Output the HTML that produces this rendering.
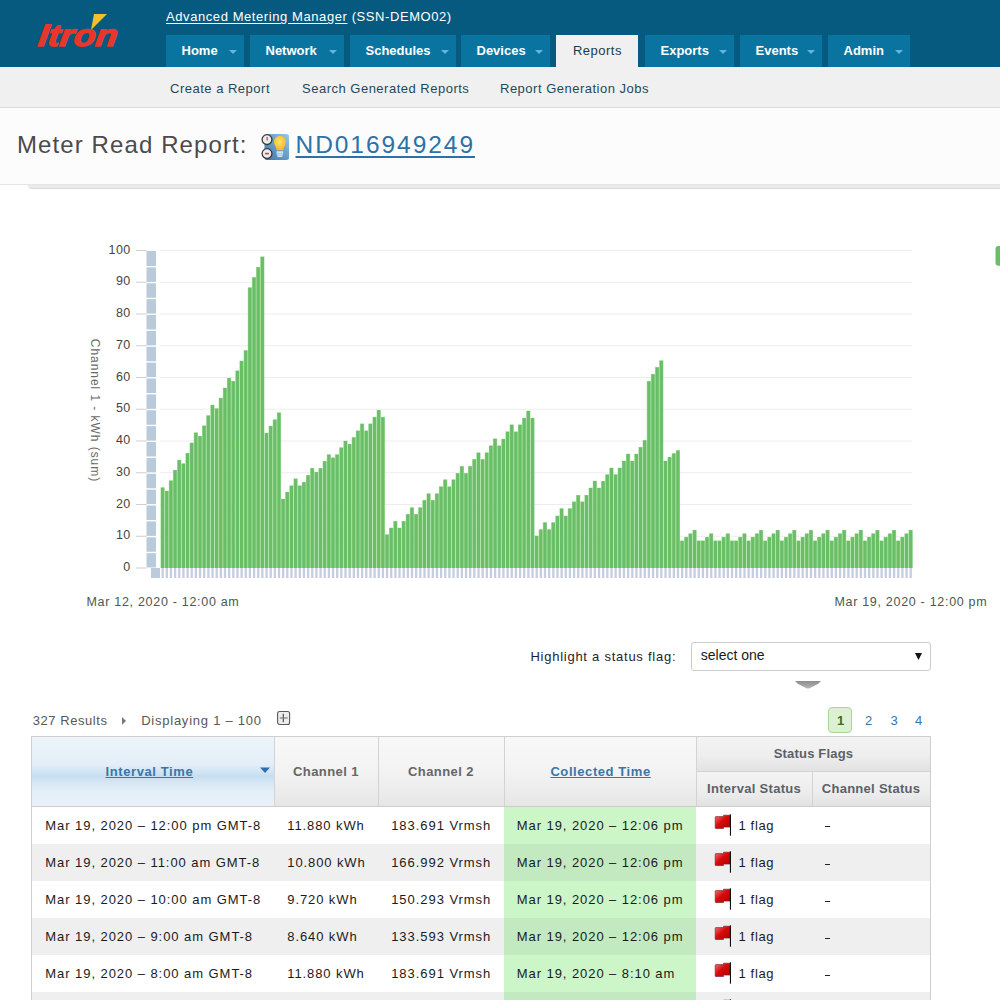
<!DOCTYPE html>
<html><head><meta charset="utf-8"><style>
html,body{margin:0;padding:0;background:#fff;}
body{width:1000px;height:1000px;overflow:hidden;position:relative;font-family:"Liberation Sans",sans-serif;}
.a{position:absolute;box-sizing:border-box;}
.t{position:absolute;white-space:pre;line-height:1;color:#1b1b1b;}
u{text-decoration:underline;text-underline-offset:2px;}
.yl{font-family:"Liberation Sans",sans-serif;font-size:12.5px;fill:#444;letter-spacing:0.35px;}
.axt{font-family:"Liberation Sans",sans-serif;font-size:12px;fill:#6a6a6a;letter-spacing:0.95px;}
</style></head><body>
<div class="a" style="left:0px;top:0px;width:1000px;height:67px;background:#065a7f"></div>
<div class="a" style="left:0px;top:67px;width:1000px;height:1px;background:#e6f5f9"></div>
<svg class="a" style="left:30px;top:5px" width="100" height="50" viewBox="0 0 100 50">
<polygon points="64,9 77,9 61,25" fill="#f3bf2d"/>
<text x="9" y="41.5" font-family="Liberation Sans" font-weight="700" font-style="italic" font-size="31" fill="#e8362b" stroke="#e8362b" stroke-width="1.3" stroke-linejoin="round" textLength="79" lengthAdjust="spacingAndGlyphs" transform="skewX(-8) translate(4,0)">Itron</text>
</svg>
<div class="t " style="left:166.00px;top:10.00px;font-size:13px;color:#fff;letter-spacing:0.58px"><u>Advanced Metering Manager</u> (SSN-DEMO02)</div>
<div class="a" style="left:166px;top:35px;width:78px;height:32px;background:#0974a0"></div>
<div class="t " style="left:181.50px;top:44.00px;font-size:13px;color:#fff;font-weight:700">Home</div>
<div class="a" style="left:229px;top:50px;width:0;height:0;border-left:4px solid transparent;border-right:4px solid transparent;border-top:4px solid #64b5de"></div>
<div class="a" style="left:250px;top:35px;width:94px;height:32px;background:#0974a0"></div>
<div class="t " style="left:265.50px;top:44.00px;font-size:13px;color:#fff;font-weight:700">Network</div>
<div class="a" style="left:329px;top:50px;width:0;height:0;border-left:4px solid transparent;border-right:4px solid transparent;border-top:4px solid #64b5de"></div>
<div class="a" style="left:350px;top:35px;width:105.5px;height:32px;background:#0974a0"></div>
<div class="t " style="left:365.50px;top:44.00px;font-size:13px;color:#fff;font-weight:700">Schedules</div>
<div class="a" style="left:440.5px;top:50px;width:0;height:0;border-left:4px solid transparent;border-right:4px solid transparent;border-top:4px solid #64b5de"></div>
<div class="a" style="left:461px;top:35px;width:88.5px;height:32px;background:#0974a0"></div>
<div class="t " style="left:476.50px;top:44.00px;font-size:13px;color:#fff;font-weight:700">Devices</div>
<div class="a" style="left:534.5px;top:50px;width:0;height:0;border-left:4px solid transparent;border-right:4px solid transparent;border-top:4px solid #64b5de"></div>
<div class="a" style="left:556px;top:35px;width:82px;height:33px;background:#f0f0f0"></div>
<div class="t " style="left:573.00px;top:44.00px;font-size:13px;color:#1e3a4c;letter-spacing:0.48px">Reports</div>
<div class="a" style="left:645px;top:35px;width:89px;height:32px;background:#0974a0"></div>
<div class="t " style="left:660.50px;top:44.00px;font-size:13px;color:#fff;font-weight:700">Exports</div>
<div class="a" style="left:719px;top:50px;width:0;height:0;border-left:4px solid transparent;border-right:4px solid transparent;border-top:4px solid #64b5de"></div>
<div class="a" style="left:740px;top:35px;width:82px;height:32px;background:#0974a0"></div>
<div class="t " style="left:755.50px;top:44.00px;font-size:13px;color:#fff;font-weight:700">Events</div>
<div class="a" style="left:807px;top:50px;width:0;height:0;border-left:4px solid transparent;border-right:4px solid transparent;border-top:4px solid #64b5de"></div>
<div class="a" style="left:828px;top:35px;width:82px;height:32px;background:#0974a0"></div>
<div class="t " style="left:843.50px;top:44.00px;font-size:13px;color:#fff;font-weight:700">Admin</div>
<div class="a" style="left:895px;top:50px;width:0;height:0;border-left:4px solid transparent;border-right:4px solid transparent;border-top:4px solid #64b5de"></div>
<div class="a" style="left:0px;top:68px;width:1000px;height:39px;background:#f0f0f0"></div>
<div class="a" style="left:0px;top:107px;width:1000px;height:1px;background:#dcdcdc"></div>
<div class="t " style="left:170.00px;top:82.30px;font-size:13px;color:#1d4a5b;letter-spacing:0.5px">Create a Report</div>
<div class="t " style="left:302.00px;top:82.30px;font-size:13px;color:#1d4a5b;letter-spacing:0.5px">Search Generated Reports</div>
<div class="t " style="left:500.00px;top:82.30px;font-size:13px;color:#1d4a5b;letter-spacing:0.5px">Report Generation Jobs</div>
<div class="a" style="left:0px;top:108px;width:1000px;height:76px;background:#fdfcfc"></div>
<div class="a" style="left:0px;top:184px;width:1000px;height:1px;background:#e4e4e4"></div>
<div class="a" style="left:28px;top:185px;width:972px;height:3.5px;background:#ebebeb;border-bottom:1px solid #dadada;border-bottom-left-radius:4px"></div>
<div class="t " style="left:17.00px;top:133.43px;font-size:24px;color:#4b4b4b;letter-spacing:1.1px">Meter Read Report:</div>
<svg class="a" style="left:261px;top:133px" width="29" height="28" viewBox="0 0 29 28">
<defs><linearGradient id="ib" x1="0" y1="1" x2="1" y2="0"><stop offset="0" stop-color="#3f74a8"/><stop offset="0.6" stop-color="#6ea3cc"/><stop offset="1" stop-color="#9ccbe6"/></linearGradient>
<radialGradient id="bulb" cx="0.45" cy="0.4" r="0.7"><stop offset="0" stop-color="#fde36a"/><stop offset="1" stop-color="#f0b21a"/></radialGradient></defs>
<rect x="3.5" y="1" width="24.5" height="26" rx="2.5" fill="url(#ib)"/>
<circle cx="6" cy="6.6" r="4.9" fill="#ececec" stroke="#3a3a3a" stroke-width="1.3"/>
<circle cx="6" cy="20.6" r="4.9" fill="#ececec" stroke="#3a3a3a" stroke-width="1.3"/>
<path d="M6 4 L6.3 7.5" stroke="#cf3a55" stroke-width="1.2"/>
<path d="M4 20.6 L8 20.6" stroke="#d8405a" stroke-width="1.6"/>
<path d="M19 3 C22.6 3 25 5.6 25 8.8 C25 11.5 23 13.5 22.2 17.2 L15.8 17.2 C15 13.5 13 11.5 13 8.8 C13 5.6 15.4 3 19 3 Z" fill="url(#bulb)"/>
<rect x="15.6" y="18.4" width="6.6" height="1.4" fill="#eef7fc"/><rect x="15.6" y="20.4" width="6.6" height="1.4" fill="#d9ecf7"/><rect x="16.4" y="22.4" width="5" height="1.4" fill="#eef7fc"/>
</svg>
<div class="t " style="left:295.50px;top:133.01px;font-size:24.5px;color:#2b72a9;letter-spacing:1.95px"><u style="text-underline-offset:3px">ND016949249</u></div>
<svg class="a" style="left:0;top:0" width="1000" height="620" viewBox="0 0 1000 620"><rect x="160" y="250.00" width="752" height="1" fill="#ededed"/>
<rect x="160" y="281.75" width="752" height="1" fill="#ededed"/>
<rect x="160" y="313.50" width="752" height="1" fill="#ededed"/>
<rect x="160" y="345.25" width="752" height="1" fill="#ededed"/>
<rect x="160" y="377.00" width="752" height="1" fill="#ededed"/>
<rect x="160" y="408.75" width="752" height="1" fill="#ededed"/>
<rect x="160" y="440.50" width="752" height="1" fill="#ededed"/>
<rect x="160" y="472.25" width="752" height="1" fill="#ededed"/>
<rect x="160" y="504.00" width="752" height="1" fill="#ededed"/>
<rect x="160" y="535.75" width="752" height="1" fill="#ededed"/>
<rect x="136" y="250.00" width="10.5" height="1" fill="#cfcfcf"/>
<rect x="136" y="281.75" width="10.5" height="1" fill="#cfcfcf"/>
<rect x="136" y="313.50" width="10.5" height="1" fill="#cfcfcf"/>
<rect x="136" y="345.25" width="10.5" height="1" fill="#cfcfcf"/>
<rect x="136" y="377.00" width="10.5" height="1" fill="#cfcfcf"/>
<rect x="136" y="408.75" width="10.5" height="1" fill="#cfcfcf"/>
<rect x="136" y="440.50" width="10.5" height="1" fill="#cfcfcf"/>
<rect x="136" y="472.25" width="10.5" height="1" fill="#cfcfcf"/>
<rect x="136" y="504.00" width="10.5" height="1" fill="#cfcfcf"/>
<rect x="136" y="535.75" width="10.5" height="1" fill="#cfcfcf"/>
<rect x="136" y="567.50" width="10.5" height="1" fill="#cfcfcf"/>
<text x="130.5" y="253.60" text-anchor="end" class="yl">100</text>
<text x="130.5" y="285.35" text-anchor="end" class="yl">90</text>
<text x="130.5" y="317.10" text-anchor="end" class="yl">80</text>
<text x="130.5" y="348.85" text-anchor="end" class="yl">70</text>
<text x="130.5" y="380.60" text-anchor="end" class="yl">60</text>
<text x="130.5" y="412.35" text-anchor="end" class="yl">50</text>
<text x="130.5" y="444.10" text-anchor="end" class="yl">40</text>
<text x="130.5" y="475.85" text-anchor="end" class="yl">30</text>
<text x="130.5" y="507.60" text-anchor="end" class="yl">20</text>
<text x="130.5" y="539.35" text-anchor="end" class="yl">10</text>
<text x="130.5" y="571.10" text-anchor="end" class="yl">0</text>
<rect x="146.5" y="251.00" width="9.5" height="15.00" fill="#b9cadb"/>
<rect x="146.5" y="267.40" width="9.5" height="14.48" fill="#b9cadb"/>
<rect x="146.5" y="283.27" width="9.5" height="14.48" fill="#b9cadb"/>
<rect x="146.5" y="299.15" width="9.5" height="14.48" fill="#b9cadb"/>
<rect x="146.5" y="315.02" width="9.5" height="14.48" fill="#b9cadb"/>
<rect x="146.5" y="330.90" width="9.5" height="14.48" fill="#b9cadb"/>
<rect x="146.5" y="346.77" width="9.5" height="14.48" fill="#b9cadb"/>
<rect x="146.5" y="362.65" width="9.5" height="14.48" fill="#b9cadb"/>
<rect x="146.5" y="378.52" width="9.5" height="14.48" fill="#b9cadb"/>
<rect x="146.5" y="394.40" width="9.5" height="14.48" fill="#b9cadb"/>
<rect x="146.5" y="410.27" width="9.5" height="14.48" fill="#b9cadb"/>
<rect x="146.5" y="426.15" width="9.5" height="14.48" fill="#b9cadb"/>
<rect x="146.5" y="442.02" width="9.5" height="14.48" fill="#b9cadb"/>
<rect x="146.5" y="457.90" width="9.5" height="14.48" fill="#b9cadb"/>
<rect x="146.5" y="473.77" width="9.5" height="14.48" fill="#b9cadb"/>
<rect x="146.5" y="489.65" width="9.5" height="14.48" fill="#b9cadb"/>
<rect x="146.5" y="505.52" width="9.5" height="14.48" fill="#b9cadb"/>
<rect x="146.5" y="521.40" width="9.5" height="14.48" fill="#b9cadb"/>
<rect x="146.5" y="537.27" width="9.5" height="14.48" fill="#b9cadb"/>
<rect x="146.5" y="553.15" width="9.5" height="14.35" fill="#b9cadb"/>
<rect x="151" y="568" width="9" height="10" fill="#bccadb"/>
<rect x="161.50" y="568" width="2.3" height="10" fill="#c6cde0"/>
<rect x="165.66" y="568" width="2.3" height="10" fill="#c6cde0"/>
<rect x="169.81" y="568" width="2.3" height="10" fill="#c6cde0"/>
<rect x="173.97" y="568" width="2.3" height="10" fill="#c6cde0"/>
<rect x="178.12" y="568" width="2.3" height="10" fill="#c6cde0"/>
<rect x="182.28" y="568" width="2.3" height="10" fill="#c6cde0"/>
<rect x="186.44" y="568" width="2.3" height="10" fill="#c6cde0"/>
<rect x="190.59" y="568" width="2.3" height="10" fill="#c6cde0"/>
<rect x="194.75" y="568" width="2.3" height="10" fill="#c6cde0"/>
<rect x="198.90" y="568" width="2.3" height="10" fill="#c6cde0"/>
<rect x="203.06" y="568" width="2.3" height="10" fill="#c6cde0"/>
<rect x="207.22" y="568" width="2.3" height="10" fill="#c6cde0"/>
<rect x="211.37" y="568" width="2.3" height="10" fill="#c6cde0"/>
<rect x="215.53" y="568" width="2.3" height="10" fill="#c6cde0"/>
<rect x="219.68" y="568" width="2.3" height="10" fill="#c6cde0"/>
<rect x="223.84" y="568" width="2.3" height="10" fill="#c6cde0"/>
<rect x="228.00" y="568" width="2.3" height="10" fill="#c6cde0"/>
<rect x="232.15" y="568" width="2.3" height="10" fill="#c6cde0"/>
<rect x="236.31" y="568" width="2.3" height="10" fill="#c6cde0"/>
<rect x="240.46" y="568" width="2.3" height="10" fill="#c6cde0"/>
<rect x="244.62" y="568" width="2.3" height="10" fill="#c6cde0"/>
<rect x="248.78" y="568" width="2.3" height="10" fill="#c6cde0"/>
<rect x="252.93" y="568" width="2.3" height="10" fill="#c6cde0"/>
<rect x="257.09" y="568" width="2.3" height="10" fill="#c6cde0"/>
<rect x="261.24" y="568" width="2.3" height="10" fill="#c6cde0"/>
<rect x="265.40" y="568" width="2.3" height="10" fill="#c6cde0"/>
<rect x="269.56" y="568" width="2.3" height="10" fill="#c6cde0"/>
<rect x="273.71" y="568" width="2.3" height="10" fill="#c6cde0"/>
<rect x="277.87" y="568" width="2.3" height="10" fill="#c6cde0"/>
<rect x="282.02" y="568" width="2.3" height="10" fill="#c6cde0"/>
<rect x="286.18" y="568" width="2.3" height="10" fill="#c6cde0"/>
<rect x="290.34" y="568" width="2.3" height="10" fill="#c6cde0"/>
<rect x="294.49" y="568" width="2.3" height="10" fill="#c6cde0"/>
<rect x="298.65" y="568" width="2.3" height="10" fill="#c6cde0"/>
<rect x="302.80" y="568" width="2.3" height="10" fill="#c6cde0"/>
<rect x="306.96" y="568" width="2.3" height="10" fill="#c6cde0"/>
<rect x="311.12" y="568" width="2.3" height="10" fill="#c6cde0"/>
<rect x="315.27" y="568" width="2.3" height="10" fill="#c6cde0"/>
<rect x="319.43" y="568" width="2.3" height="10" fill="#c6cde0"/>
<rect x="323.58" y="568" width="2.3" height="10" fill="#c6cde0"/>
<rect x="327.74" y="568" width="2.3" height="10" fill="#c6cde0"/>
<rect x="331.90" y="568" width="2.3" height="10" fill="#c6cde0"/>
<rect x="336.05" y="568" width="2.3" height="10" fill="#c6cde0"/>
<rect x="340.21" y="568" width="2.3" height="10" fill="#c6cde0"/>
<rect x="344.36" y="568" width="2.3" height="10" fill="#c6cde0"/>
<rect x="348.52" y="568" width="2.3" height="10" fill="#c6cde0"/>
<rect x="352.68" y="568" width="2.3" height="10" fill="#c6cde0"/>
<rect x="356.83" y="568" width="2.3" height="10" fill="#c6cde0"/>
<rect x="360.99" y="568" width="2.3" height="10" fill="#c6cde0"/>
<rect x="365.14" y="568" width="2.3" height="10" fill="#c6cde0"/>
<rect x="369.30" y="568" width="2.3" height="10" fill="#c6cde0"/>
<rect x="373.46" y="568" width="2.3" height="10" fill="#c6cde0"/>
<rect x="377.61" y="568" width="2.3" height="10" fill="#c6cde0"/>
<rect x="381.77" y="568" width="2.3" height="10" fill="#c6cde0"/>
<rect x="385.92" y="568" width="2.3" height="10" fill="#c6cde0"/>
<rect x="390.08" y="568" width="2.3" height="10" fill="#c6cde0"/>
<rect x="394.24" y="568" width="2.3" height="10" fill="#c6cde0"/>
<rect x="398.39" y="568" width="2.3" height="10" fill="#c6cde0"/>
<rect x="402.55" y="568" width="2.3" height="10" fill="#c6cde0"/>
<rect x="406.70" y="568" width="2.3" height="10" fill="#c6cde0"/>
<rect x="410.86" y="568" width="2.3" height="10" fill="#c6cde0"/>
<rect x="415.02" y="568" width="2.3" height="10" fill="#c6cde0"/>
<rect x="419.17" y="568" width="2.3" height="10" fill="#c6cde0"/>
<rect x="423.33" y="568" width="2.3" height="10" fill="#c6cde0"/>
<rect x="427.48" y="568" width="2.3" height="10" fill="#c6cde0"/>
<rect x="431.64" y="568" width="2.3" height="10" fill="#c6cde0"/>
<rect x="435.80" y="568" width="2.3" height="10" fill="#c6cde0"/>
<rect x="439.95" y="568" width="2.3" height="10" fill="#c6cde0"/>
<rect x="444.11" y="568" width="2.3" height="10" fill="#c6cde0"/>
<rect x="448.26" y="568" width="2.3" height="10" fill="#c6cde0"/>
<rect x="452.42" y="568" width="2.3" height="10" fill="#c6cde0"/>
<rect x="456.58" y="568" width="2.3" height="10" fill="#c6cde0"/>
<rect x="460.73" y="568" width="2.3" height="10" fill="#c6cde0"/>
<rect x="464.89" y="568" width="2.3" height="10" fill="#c6cde0"/>
<rect x="469.04" y="568" width="2.3" height="10" fill="#c6cde0"/>
<rect x="473.20" y="568" width="2.3" height="10" fill="#c6cde0"/>
<rect x="477.36" y="568" width="2.3" height="10" fill="#c6cde0"/>
<rect x="481.51" y="568" width="2.3" height="10" fill="#c6cde0"/>
<rect x="485.67" y="568" width="2.3" height="10" fill="#c6cde0"/>
<rect x="489.82" y="568" width="2.3" height="10" fill="#c6cde0"/>
<rect x="493.98" y="568" width="2.3" height="10" fill="#c6cde0"/>
<rect x="498.14" y="568" width="2.3" height="10" fill="#c6cde0"/>
<rect x="502.29" y="568" width="2.3" height="10" fill="#c6cde0"/>
<rect x="506.45" y="568" width="2.3" height="10" fill="#c6cde0"/>
<rect x="510.60" y="568" width="2.3" height="10" fill="#c6cde0"/>
<rect x="514.76" y="568" width="2.3" height="10" fill="#c6cde0"/>
<rect x="518.92" y="568" width="2.3" height="10" fill="#c6cde0"/>
<rect x="523.07" y="568" width="2.3" height="10" fill="#c6cde0"/>
<rect x="527.23" y="568" width="2.3" height="10" fill="#c6cde0"/>
<rect x="531.38" y="568" width="2.3" height="10" fill="#c6cde0"/>
<rect x="535.54" y="568" width="2.3" height="10" fill="#c6cde0"/>
<rect x="539.70" y="568" width="2.3" height="10" fill="#c6cde0"/>
<rect x="543.85" y="568" width="2.3" height="10" fill="#c6cde0"/>
<rect x="548.01" y="568" width="2.3" height="10" fill="#c6cde0"/>
<rect x="552.16" y="568" width="2.3" height="10" fill="#c6cde0"/>
<rect x="556.32" y="568" width="2.3" height="10" fill="#c6cde0"/>
<rect x="560.48" y="568" width="2.3" height="10" fill="#c6cde0"/>
<rect x="564.63" y="568" width="2.3" height="10" fill="#c6cde0"/>
<rect x="568.79" y="568" width="2.3" height="10" fill="#c6cde0"/>
<rect x="572.94" y="568" width="2.3" height="10" fill="#c6cde0"/>
<rect x="577.10" y="568" width="2.3" height="10" fill="#c6cde0"/>
<rect x="581.26" y="568" width="2.3" height="10" fill="#c6cde0"/>
<rect x="585.41" y="568" width="2.3" height="10" fill="#c6cde0"/>
<rect x="589.57" y="568" width="2.3" height="10" fill="#c6cde0"/>
<rect x="593.72" y="568" width="2.3" height="10" fill="#c6cde0"/>
<rect x="597.88" y="568" width="2.3" height="10" fill="#c6cde0"/>
<rect x="602.04" y="568" width="2.3" height="10" fill="#c6cde0"/>
<rect x="606.19" y="568" width="2.3" height="10" fill="#c6cde0"/>
<rect x="610.35" y="568" width="2.3" height="10" fill="#c6cde0"/>
<rect x="614.50" y="568" width="2.3" height="10" fill="#c6cde0"/>
<rect x="618.66" y="568" width="2.3" height="10" fill="#c6cde0"/>
<rect x="622.82" y="568" width="2.3" height="10" fill="#c6cde0"/>
<rect x="626.97" y="568" width="2.3" height="10" fill="#c6cde0"/>
<rect x="631.13" y="568" width="2.3" height="10" fill="#c6cde0"/>
<rect x="635.28" y="568" width="2.3" height="10" fill="#c6cde0"/>
<rect x="639.44" y="568" width="2.3" height="10" fill="#c6cde0"/>
<rect x="643.60" y="568" width="2.3" height="10" fill="#c6cde0"/>
<rect x="647.75" y="568" width="2.3" height="10" fill="#c6cde0"/>
<rect x="651.91" y="568" width="2.3" height="10" fill="#c6cde0"/>
<rect x="656.06" y="568" width="2.3" height="10" fill="#c6cde0"/>
<rect x="660.22" y="568" width="2.3" height="10" fill="#c6cde0"/>
<rect x="664.38" y="568" width="2.3" height="10" fill="#c6cde0"/>
<rect x="668.53" y="568" width="2.3" height="10" fill="#c6cde0"/>
<rect x="672.69" y="568" width="2.3" height="10" fill="#c6cde0"/>
<rect x="676.84" y="568" width="2.3" height="10" fill="#c6cde0"/>
<rect x="681.00" y="568" width="2.3" height="10" fill="#c6cde0"/>
<rect x="685.16" y="568" width="2.3" height="10" fill="#c6cde0"/>
<rect x="689.31" y="568" width="2.3" height="10" fill="#c6cde0"/>
<rect x="693.47" y="568" width="2.3" height="10" fill="#c6cde0"/>
<rect x="697.62" y="568" width="2.3" height="10" fill="#c6cde0"/>
<rect x="701.78" y="568" width="2.3" height="10" fill="#c6cde0"/>
<rect x="705.94" y="568" width="2.3" height="10" fill="#c6cde0"/>
<rect x="710.09" y="568" width="2.3" height="10" fill="#c6cde0"/>
<rect x="714.25" y="568" width="2.3" height="10" fill="#c6cde0"/>
<rect x="718.40" y="568" width="2.3" height="10" fill="#c6cde0"/>
<rect x="722.56" y="568" width="2.3" height="10" fill="#c6cde0"/>
<rect x="726.72" y="568" width="2.3" height="10" fill="#c6cde0"/>
<rect x="730.87" y="568" width="2.3" height="10" fill="#c6cde0"/>
<rect x="735.03" y="568" width="2.3" height="10" fill="#c6cde0"/>
<rect x="739.18" y="568" width="2.3" height="10" fill="#c6cde0"/>
<rect x="743.34" y="568" width="2.3" height="10" fill="#c6cde0"/>
<rect x="747.50" y="568" width="2.3" height="10" fill="#c6cde0"/>
<rect x="751.65" y="568" width="2.3" height="10" fill="#c6cde0"/>
<rect x="755.81" y="568" width="2.3" height="10" fill="#c6cde0"/>
<rect x="759.96" y="568" width="2.3" height="10" fill="#c6cde0"/>
<rect x="764.12" y="568" width="2.3" height="10" fill="#c6cde0"/>
<rect x="768.28" y="568" width="2.3" height="10" fill="#c6cde0"/>
<rect x="772.43" y="568" width="2.3" height="10" fill="#c6cde0"/>
<rect x="776.59" y="568" width="2.3" height="10" fill="#c6cde0"/>
<rect x="780.74" y="568" width="2.3" height="10" fill="#c6cde0"/>
<rect x="784.90" y="568" width="2.3" height="10" fill="#c6cde0"/>
<rect x="789.06" y="568" width="2.3" height="10" fill="#c6cde0"/>
<rect x="793.21" y="568" width="2.3" height="10" fill="#c6cde0"/>
<rect x="797.37" y="568" width="2.3" height="10" fill="#c6cde0"/>
<rect x="801.52" y="568" width="2.3" height="10" fill="#c6cde0"/>
<rect x="805.68" y="568" width="2.3" height="10" fill="#c6cde0"/>
<rect x="809.84" y="568" width="2.3" height="10" fill="#c6cde0"/>
<rect x="813.99" y="568" width="2.3" height="10" fill="#c6cde0"/>
<rect x="818.15" y="568" width="2.3" height="10" fill="#c6cde0"/>
<rect x="822.30" y="568" width="2.3" height="10" fill="#c6cde0"/>
<rect x="826.46" y="568" width="2.3" height="10" fill="#c6cde0"/>
<rect x="830.62" y="568" width="2.3" height="10" fill="#c6cde0"/>
<rect x="834.77" y="568" width="2.3" height="10" fill="#c6cde0"/>
<rect x="838.93" y="568" width="2.3" height="10" fill="#c6cde0"/>
<rect x="843.08" y="568" width="2.3" height="10" fill="#c6cde0"/>
<rect x="847.24" y="568" width="2.3" height="10" fill="#c6cde0"/>
<rect x="851.40" y="568" width="2.3" height="10" fill="#c6cde0"/>
<rect x="855.55" y="568" width="2.3" height="10" fill="#c6cde0"/>
<rect x="859.71" y="568" width="2.3" height="10" fill="#c6cde0"/>
<rect x="863.86" y="568" width="2.3" height="10" fill="#c6cde0"/>
<rect x="868.02" y="568" width="2.3" height="10" fill="#c6cde0"/>
<rect x="872.18" y="568" width="2.3" height="10" fill="#c6cde0"/>
<rect x="876.33" y="568" width="2.3" height="10" fill="#c6cde0"/>
<rect x="880.49" y="568" width="2.3" height="10" fill="#c6cde0"/>
<rect x="884.64" y="568" width="2.3" height="10" fill="#c6cde0"/>
<rect x="888.80" y="568" width="2.3" height="10" fill="#c6cde0"/>
<rect x="892.96" y="568" width="2.3" height="10" fill="#c6cde0"/>
<rect x="897.11" y="568" width="2.3" height="10" fill="#c6cde0"/>
<rect x="901.27" y="568" width="2.3" height="10" fill="#c6cde0"/>
<rect x="905.42" y="568" width="2.3" height="10" fill="#c6cde0"/>
<rect x="909.58" y="568" width="2.3" height="10" fill="#c6cde0"/>
<rect x="160.50" y="487.37" width="4.2" height="80.63" fill="#a8e2a0"/>
<rect x="164.66" y="490.71" width="4.2" height="77.29" fill="#a8e2a0"/>
<rect x="168.81" y="480.39" width="4.2" height="87.61" fill="#a8e2a0"/>
<rect x="172.97" y="469.91" width="4.2" height="98.09" fill="#a8e2a0"/>
<rect x="177.12" y="459.91" width="4.2" height="108.09" fill="#a8e2a0"/>
<rect x="181.28" y="463.40" width="4.2" height="104.60" fill="#a8e2a0"/>
<rect x="185.44" y="453.08" width="4.2" height="114.92" fill="#a8e2a0"/>
<rect x="189.59" y="442.61" width="4.2" height="125.39" fill="#a8e2a0"/>
<rect x="193.75" y="432.44" width="4.2" height="135.56" fill="#a8e2a0"/>
<rect x="197.90" y="435.94" width="4.2" height="132.06" fill="#a8e2a0"/>
<rect x="202.06" y="425.46" width="4.2" height="142.54" fill="#a8e2a0"/>
<rect x="206.22" y="415.30" width="4.2" height="152.70" fill="#a8e2a0"/>
<rect x="210.37" y="404.82" width="4.2" height="163.18" fill="#a8e2a0"/>
<rect x="214.53" y="408.31" width="4.2" height="159.69" fill="#a8e2a0"/>
<rect x="218.68" y="397.84" width="4.2" height="170.16" fill="#a8e2a0"/>
<rect x="222.84" y="387.68" width="4.2" height="180.32" fill="#a8e2a0"/>
<rect x="227.00" y="377.83" width="4.2" height="190.16" fill="#a8e2a0"/>
<rect x="231.15" y="381.01" width="4.2" height="186.99" fill="#a8e2a0"/>
<rect x="235.31" y="370.53" width="4.2" height="197.47" fill="#a8e2a0"/>
<rect x="239.46" y="360.69" width="4.2" height="207.31" fill="#a8e2a0"/>
<rect x="243.62" y="350.21" width="4.2" height="217.79" fill="#a8e2a0"/>
<rect x="247.78" y="287.35" width="4.2" height="280.65" fill="#a8e2a0"/>
<rect x="251.93" y="277.19" width="4.2" height="290.81" fill="#a8e2a0"/>
<rect x="256.09" y="267.03" width="4.2" height="300.97" fill="#a8e2a0"/>
<rect x="260.24" y="256.55" width="4.2" height="311.45" fill="#a8e2a0"/>
<rect x="264.40" y="432.76" width="4.2" height="135.24" fill="#a8e2a0"/>
<rect x="268.56" y="425.78" width="4.2" height="142.22" fill="#a8e2a0"/>
<rect x="272.71" y="419.43" width="4.2" height="148.57" fill="#a8e2a0"/>
<rect x="276.87" y="412.44" width="4.2" height="155.56" fill="#a8e2a0"/>
<rect x="281.02" y="498.80" width="4.2" height="69.20" fill="#a8e2a0"/>
<rect x="285.18" y="491.82" width="4.2" height="76.18" fill="#a8e2a0"/>
<rect x="289.34" y="485.47" width="4.2" height="82.53" fill="#a8e2a0"/>
<rect x="293.49" y="478.48" width="4.2" height="89.52" fill="#a8e2a0"/>
<rect x="297.65" y="485.47" width="4.2" height="82.53" fill="#a8e2a0"/>
<rect x="301.80" y="481.97" width="4.2" height="86.02" fill="#a8e2a0"/>
<rect x="305.96" y="474.99" width="4.2" height="93.01" fill="#a8e2a0"/>
<rect x="310.12" y="468.00" width="4.2" height="99.99" fill="#a8e2a0"/>
<rect x="314.27" y="471.81" width="4.2" height="96.18" fill="#a8e2a0"/>
<rect x="318.43" y="468.00" width="4.2" height="99.99" fill="#a8e2a0"/>
<rect x="322.58" y="461.02" width="4.2" height="106.98" fill="#a8e2a0"/>
<rect x="326.74" y="454.35" width="4.2" height="113.65" fill="#a8e2a0"/>
<rect x="330.90" y="457.53" width="4.2" height="110.47" fill="#a8e2a0"/>
<rect x="335.05" y="454.35" width="4.2" height="113.65" fill="#a8e2a0"/>
<rect x="339.21" y="447.37" width="4.2" height="120.63" fill="#a8e2a0"/>
<rect x="343.36" y="440.70" width="4.2" height="127.30" fill="#a8e2a0"/>
<rect x="347.52" y="443.88" width="4.2" height="124.12" fill="#a8e2a0"/>
<rect x="351.68" y="437.21" width="4.2" height="130.79" fill="#a8e2a0"/>
<rect x="355.83" y="430.54" width="4.2" height="137.46" fill="#a8e2a0"/>
<rect x="359.99" y="423.56" width="4.2" height="144.44" fill="#a8e2a0"/>
<rect x="364.14" y="430.54" width="4.2" height="137.46" fill="#a8e2a0"/>
<rect x="368.30" y="423.56" width="4.2" height="144.44" fill="#a8e2a0"/>
<rect x="372.46" y="416.89" width="4.2" height="151.11" fill="#a8e2a0"/>
<rect x="376.61" y="409.90" width="4.2" height="158.10" fill="#a8e2a0"/>
<rect x="380.77" y="416.89" width="4.2" height="151.11" fill="#a8e2a0"/>
<rect x="384.92" y="534.36" width="4.2" height="33.64" fill="#a8e2a0"/>
<rect x="389.08" y="527.70" width="4.2" height="40.30" fill="#a8e2a0"/>
<rect x="393.24" y="521.03" width="4.2" height="46.97" fill="#a8e2a0"/>
<rect x="397.39" y="527.70" width="4.2" height="40.30" fill="#a8e2a0"/>
<rect x="401.55" y="521.03" width="4.2" height="46.97" fill="#a8e2a0"/>
<rect x="405.70" y="514.04" width="4.2" height="53.96" fill="#a8e2a0"/>
<rect x="409.86" y="507.38" width="4.2" height="60.62" fill="#a8e2a0"/>
<rect x="414.02" y="514.04" width="4.2" height="53.96" fill="#a8e2a0"/>
<rect x="418.17" y="507.38" width="4.2" height="60.62" fill="#a8e2a0"/>
<rect x="422.33" y="500.07" width="4.2" height="67.93" fill="#a8e2a0"/>
<rect x="426.48" y="493.41" width="4.2" height="74.59" fill="#a8e2a0"/>
<rect x="430.64" y="500.07" width="4.2" height="67.93" fill="#a8e2a0"/>
<rect x="434.80" y="493.41" width="4.2" height="74.59" fill="#a8e2a0"/>
<rect x="438.95" y="486.42" width="4.2" height="81.58" fill="#a8e2a0"/>
<rect x="443.11" y="479.44" width="4.2" height="88.56" fill="#a8e2a0"/>
<rect x="447.26" y="486.42" width="4.2" height="81.58" fill="#a8e2a0"/>
<rect x="451.42" y="479.44" width="4.2" height="88.56" fill="#a8e2a0"/>
<rect x="455.58" y="473.08" width="4.2" height="94.91" fill="#a8e2a0"/>
<rect x="459.73" y="466.10" width="4.2" height="101.90" fill="#a8e2a0"/>
<rect x="463.89" y="473.08" width="4.2" height="94.91" fill="#a8e2a0"/>
<rect x="468.04" y="466.10" width="4.2" height="101.90" fill="#a8e2a0"/>
<rect x="472.20" y="459.11" width="4.2" height="108.89" fill="#a8e2a0"/>
<rect x="476.36" y="452.45" width="4.2" height="115.55" fill="#a8e2a0"/>
<rect x="480.51" y="459.11" width="4.2" height="108.89" fill="#a8e2a0"/>
<rect x="484.67" y="452.45" width="4.2" height="115.55" fill="#a8e2a0"/>
<rect x="488.82" y="445.46" width="4.2" height="122.54" fill="#a8e2a0"/>
<rect x="492.98" y="438.48" width="4.2" height="129.52" fill="#a8e2a0"/>
<rect x="497.14" y="445.46" width="4.2" height="122.54" fill="#a8e2a0"/>
<rect x="501.29" y="438.80" width="4.2" height="129.21" fill="#a8e2a0"/>
<rect x="505.45" y="431.49" width="4.2" height="136.51" fill="#a8e2a0"/>
<rect x="509.60" y="424.51" width="4.2" height="143.49" fill="#a8e2a0"/>
<rect x="513.76" y="431.49" width="4.2" height="136.51" fill="#a8e2a0"/>
<rect x="517.92" y="424.51" width="4.2" height="143.49" fill="#a8e2a0"/>
<rect x="522.07" y="417.84" width="4.2" height="150.16" fill="#a8e2a0"/>
<rect x="526.23" y="410.70" width="4.2" height="157.30" fill="#a8e2a0"/>
<rect x="530.38" y="417.84" width="4.2" height="150.16" fill="#a8e2a0"/>
<rect x="534.54" y="535.63" width="4.2" height="32.37" fill="#a8e2a0"/>
<rect x="538.70" y="529.28" width="4.2" height="38.72" fill="#a8e2a0"/>
<rect x="542.85" y="522.30" width="4.2" height="45.70" fill="#a8e2a0"/>
<rect x="547.01" y="529.28" width="4.2" height="38.72" fill="#a8e2a0"/>
<rect x="551.16" y="522.30" width="4.2" height="45.70" fill="#a8e2a0"/>
<rect x="555.32" y="515.63" width="4.2" height="52.37" fill="#a8e2a0"/>
<rect x="559.48" y="508.33" width="4.2" height="59.67" fill="#a8e2a0"/>
<rect x="563.63" y="515.63" width="4.2" height="52.37" fill="#a8e2a0"/>
<rect x="567.79" y="508.33" width="4.2" height="59.67" fill="#a8e2a0"/>
<rect x="571.94" y="501.50" width="4.2" height="66.50" fill="#a8e2a0"/>
<rect x="576.10" y="494.99" width="4.2" height="73.01" fill="#a8e2a0"/>
<rect x="580.26" y="501.50" width="4.2" height="66.50" fill="#a8e2a0"/>
<rect x="584.41" y="494.99" width="4.2" height="73.01" fill="#a8e2a0"/>
<rect x="588.57" y="487.69" width="4.2" height="80.31" fill="#a8e2a0"/>
<rect x="592.72" y="480.70" width="4.2" height="87.29" fill="#a8e2a0"/>
<rect x="596.88" y="487.69" width="4.2" height="80.31" fill="#a8e2a0"/>
<rect x="601.04" y="481.02" width="4.2" height="86.98" fill="#a8e2a0"/>
<rect x="605.19" y="474.36" width="4.2" height="93.64" fill="#a8e2a0"/>
<rect x="609.35" y="467.69" width="4.2" height="100.31" fill="#a8e2a0"/>
<rect x="613.50" y="474.36" width="4.2" height="93.64" fill="#a8e2a0"/>
<rect x="617.66" y="467.69" width="4.2" height="100.31" fill="#a8e2a0"/>
<rect x="621.82" y="460.70" width="4.2" height="107.30" fill="#a8e2a0"/>
<rect x="625.97" y="453.72" width="4.2" height="114.28" fill="#a8e2a0"/>
<rect x="630.13" y="460.70" width="4.2" height="107.30" fill="#a8e2a0"/>
<rect x="634.28" y="453.72" width="4.2" height="114.28" fill="#a8e2a0"/>
<rect x="638.44" y="447.05" width="4.2" height="120.95" fill="#a8e2a0"/>
<rect x="642.60" y="440.06" width="4.2" height="127.94" fill="#a8e2a0"/>
<rect x="646.75" y="381.01" width="4.2" height="186.99" fill="#a8e2a0"/>
<rect x="650.91" y="374.03" width="4.2" height="193.97" fill="#a8e2a0"/>
<rect x="655.06" y="367.04" width="4.2" height="200.96" fill="#a8e2a0"/>
<rect x="659.22" y="360.37" width="4.2" height="207.63" fill="#a8e2a0"/>
<rect x="663.38" y="460.70" width="4.2" height="107.30" fill="#a8e2a0"/>
<rect x="667.53" y="456.89" width="4.2" height="111.11" fill="#a8e2a0"/>
<rect x="671.69" y="453.24" width="4.2" height="114.76" fill="#a8e2a0"/>
<rect x="675.84" y="450.22" width="4.2" height="117.77" fill="#a8e2a0"/>
<rect x="680.00" y="540.55" width="4.2" height="27.45" fill="#a8e2a0"/>
<rect x="684.16" y="536.90" width="4.2" height="31.10" fill="#a8e2a0"/>
<rect x="688.31" y="533.41" width="4.2" height="34.59" fill="#a8e2a0"/>
<rect x="692.47" y="529.92" width="4.2" height="38.08" fill="#a8e2a0"/>
<rect x="696.62" y="540.55" width="4.2" height="27.45" fill="#a8e2a0"/>
<rect x="700.78" y="540.55" width="4.2" height="27.45" fill="#a8e2a0"/>
<rect x="704.94" y="536.90" width="4.2" height="31.10" fill="#a8e2a0"/>
<rect x="709.09" y="533.41" width="4.2" height="34.59" fill="#a8e2a0"/>
<rect x="713.25" y="540.55" width="4.2" height="27.45" fill="#a8e2a0"/>
<rect x="717.40" y="540.55" width="4.2" height="27.45" fill="#a8e2a0"/>
<rect x="721.56" y="536.90" width="4.2" height="31.10" fill="#a8e2a0"/>
<rect x="725.72" y="533.41" width="4.2" height="34.59" fill="#a8e2a0"/>
<rect x="729.87" y="540.55" width="4.2" height="27.45" fill="#a8e2a0"/>
<rect x="734.03" y="540.55" width="4.2" height="27.45" fill="#a8e2a0"/>
<rect x="738.18" y="536.90" width="4.2" height="31.10" fill="#a8e2a0"/>
<rect x="742.34" y="533.41" width="4.2" height="34.59" fill="#a8e2a0"/>
<rect x="746.50" y="540.55" width="4.2" height="27.45" fill="#a8e2a0"/>
<rect x="750.65" y="536.90" width="4.2" height="31.10" fill="#a8e2a0"/>
<rect x="754.81" y="533.41" width="4.2" height="34.59" fill="#a8e2a0"/>
<rect x="758.96" y="529.92" width="4.2" height="38.08" fill="#a8e2a0"/>
<rect x="763.12" y="540.55" width="4.2" height="27.45" fill="#a8e2a0"/>
<rect x="767.28" y="536.90" width="4.2" height="31.10" fill="#a8e2a0"/>
<rect x="771.43" y="533.41" width="4.2" height="34.59" fill="#a8e2a0"/>
<rect x="775.59" y="529.92" width="4.2" height="38.08" fill="#a8e2a0"/>
<rect x="779.74" y="540.55" width="4.2" height="27.45" fill="#a8e2a0"/>
<rect x="783.90" y="536.90" width="4.2" height="31.10" fill="#a8e2a0"/>
<rect x="788.06" y="533.41" width="4.2" height="34.59" fill="#a8e2a0"/>
<rect x="792.21" y="529.92" width="4.2" height="38.08" fill="#a8e2a0"/>
<rect x="796.37" y="540.55" width="4.2" height="27.45" fill="#a8e2a0"/>
<rect x="800.52" y="536.90" width="4.2" height="31.10" fill="#a8e2a0"/>
<rect x="804.68" y="533.41" width="4.2" height="34.59" fill="#a8e2a0"/>
<rect x="808.84" y="529.92" width="4.2" height="38.08" fill="#a8e2a0"/>
<rect x="812.99" y="540.55" width="4.2" height="27.45" fill="#a8e2a0"/>
<rect x="817.15" y="536.90" width="4.2" height="31.10" fill="#a8e2a0"/>
<rect x="821.30" y="533.41" width="4.2" height="34.59" fill="#a8e2a0"/>
<rect x="825.46" y="529.92" width="4.2" height="38.08" fill="#a8e2a0"/>
<rect x="829.62" y="540.55" width="4.2" height="27.45" fill="#a8e2a0"/>
<rect x="833.77" y="536.90" width="4.2" height="31.10" fill="#a8e2a0"/>
<rect x="837.93" y="533.41" width="4.2" height="34.59" fill="#a8e2a0"/>
<rect x="842.08" y="529.92" width="4.2" height="38.08" fill="#a8e2a0"/>
<rect x="846.24" y="540.55" width="4.2" height="27.45" fill="#a8e2a0"/>
<rect x="850.40" y="536.90" width="4.2" height="31.10" fill="#a8e2a0"/>
<rect x="854.55" y="533.41" width="4.2" height="34.59" fill="#a8e2a0"/>
<rect x="858.71" y="529.92" width="4.2" height="38.08" fill="#a8e2a0"/>
<rect x="862.86" y="540.55" width="4.2" height="27.45" fill="#a8e2a0"/>
<rect x="867.02" y="536.90" width="4.2" height="31.10" fill="#a8e2a0"/>
<rect x="871.18" y="533.41" width="4.2" height="34.59" fill="#a8e2a0"/>
<rect x="875.33" y="529.92" width="4.2" height="38.08" fill="#a8e2a0"/>
<rect x="879.49" y="540.55" width="4.2" height="27.45" fill="#a8e2a0"/>
<rect x="883.64" y="536.90" width="4.2" height="31.10" fill="#a8e2a0"/>
<rect x="887.80" y="533.41" width="4.2" height="34.59" fill="#a8e2a0"/>
<rect x="891.96" y="529.92" width="4.2" height="38.08" fill="#a8e2a0"/>
<rect x="896.11" y="540.55" width="4.2" height="27.45" fill="#a8e2a0"/>
<rect x="900.27" y="536.90" width="4.2" height="31.10" fill="#a8e2a0"/>
<rect x="904.42" y="533.41" width="4.2" height="34.59" fill="#a8e2a0"/>
<rect x="908.58" y="529.92" width="4.2" height="38.08" fill="#a8e2a0"/>
<rect x="161.00" y="487.67" width="3.2" height="80.33" fill="#69be67"/>
<rect x="165.16" y="491.01" width="3.2" height="76.99" fill="#69be67"/>
<rect x="169.31" y="480.69" width="3.2" height="87.31" fill="#69be67"/>
<rect x="173.47" y="470.21" width="3.2" height="97.79" fill="#69be67"/>
<rect x="177.62" y="460.21" width="3.2" height="107.79" fill="#69be67"/>
<rect x="181.78" y="463.70" width="3.2" height="104.30" fill="#69be67"/>
<rect x="185.94" y="453.38" width="3.2" height="114.62" fill="#69be67"/>
<rect x="190.09" y="442.91" width="3.2" height="125.09" fill="#69be67"/>
<rect x="194.25" y="432.75" width="3.2" height="135.25" fill="#69be67"/>
<rect x="198.40" y="436.24" width="3.2" height="131.76" fill="#69be67"/>
<rect x="202.56" y="425.76" width="3.2" height="142.24" fill="#69be67"/>
<rect x="206.72" y="415.60" width="3.2" height="152.40" fill="#69be67"/>
<rect x="210.87" y="405.12" width="3.2" height="162.88" fill="#69be67"/>
<rect x="215.03" y="408.62" width="3.2" height="159.38" fill="#69be67"/>
<rect x="219.18" y="398.14" width="3.2" height="169.86" fill="#69be67"/>
<rect x="223.34" y="387.98" width="3.2" height="180.02" fill="#69be67"/>
<rect x="227.50" y="378.13" width="3.2" height="189.86" fill="#69be67"/>
<rect x="231.65" y="381.31" width="3.2" height="186.69" fill="#69be67"/>
<rect x="235.81" y="370.83" width="3.2" height="197.17" fill="#69be67"/>
<rect x="239.96" y="360.99" width="3.2" height="207.01" fill="#69be67"/>
<rect x="244.12" y="350.51" width="3.2" height="217.49" fill="#69be67"/>
<rect x="248.28" y="287.65" width="3.2" height="280.35" fill="#69be67"/>
<rect x="252.43" y="277.49" width="3.2" height="290.51" fill="#69be67"/>
<rect x="256.59" y="267.33" width="3.2" height="300.67" fill="#69be67"/>
<rect x="260.74" y="256.85" width="3.2" height="311.15" fill="#69be67"/>
<rect x="264.90" y="433.06" width="3.2" height="134.94" fill="#69be67"/>
<rect x="269.06" y="426.08" width="3.2" height="141.92" fill="#69be67"/>
<rect x="273.21" y="419.73" width="3.2" height="148.27" fill="#69be67"/>
<rect x="277.37" y="412.74" width="3.2" height="155.26" fill="#69be67"/>
<rect x="281.52" y="499.10" width="3.2" height="68.90" fill="#69be67"/>
<rect x="285.68" y="492.12" width="3.2" height="75.88" fill="#69be67"/>
<rect x="289.84" y="485.77" width="3.2" height="82.23" fill="#69be67"/>
<rect x="293.99" y="478.78" width="3.2" height="89.22" fill="#69be67"/>
<rect x="298.15" y="485.77" width="3.2" height="82.23" fill="#69be67"/>
<rect x="302.30" y="482.27" width="3.2" height="85.72" fill="#69be67"/>
<rect x="306.46" y="475.29" width="3.2" height="92.71" fill="#69be67"/>
<rect x="310.62" y="468.31" width="3.2" height="99.69" fill="#69be67"/>
<rect x="314.77" y="472.12" width="3.2" height="95.88" fill="#69be67"/>
<rect x="318.93" y="468.31" width="3.2" height="99.69" fill="#69be67"/>
<rect x="323.08" y="461.32" width="3.2" height="106.68" fill="#69be67"/>
<rect x="327.24" y="454.65" width="3.2" height="113.35" fill="#69be67"/>
<rect x="331.40" y="457.83" width="3.2" height="110.17" fill="#69be67"/>
<rect x="335.55" y="454.65" width="3.2" height="113.35" fill="#69be67"/>
<rect x="339.71" y="447.67" width="3.2" height="120.33" fill="#69be67"/>
<rect x="343.86" y="441.00" width="3.2" height="127.00" fill="#69be67"/>
<rect x="348.02" y="444.18" width="3.2" height="123.82" fill="#69be67"/>
<rect x="352.18" y="437.51" width="3.2" height="130.49" fill="#69be67"/>
<rect x="356.33" y="430.84" width="3.2" height="137.16" fill="#69be67"/>
<rect x="360.49" y="423.86" width="3.2" height="144.14" fill="#69be67"/>
<rect x="364.64" y="430.84" width="3.2" height="137.16" fill="#69be67"/>
<rect x="368.80" y="423.86" width="3.2" height="144.14" fill="#69be67"/>
<rect x="372.96" y="417.19" width="3.2" height="150.81" fill="#69be67"/>
<rect x="377.11" y="410.20" width="3.2" height="157.80" fill="#69be67"/>
<rect x="381.27" y="417.19" width="3.2" height="150.81" fill="#69be67"/>
<rect x="385.42" y="534.66" width="3.2" height="33.34" fill="#69be67"/>
<rect x="389.58" y="528.00" width="3.2" height="40.00" fill="#69be67"/>
<rect x="393.74" y="521.33" width="3.2" height="46.67" fill="#69be67"/>
<rect x="397.89" y="528.00" width="3.2" height="40.00" fill="#69be67"/>
<rect x="402.05" y="521.33" width="3.2" height="46.67" fill="#69be67"/>
<rect x="406.20" y="514.34" width="3.2" height="53.66" fill="#69be67"/>
<rect x="410.36" y="507.68" width="3.2" height="60.32" fill="#69be67"/>
<rect x="414.52" y="514.34" width="3.2" height="53.66" fill="#69be67"/>
<rect x="418.67" y="507.68" width="3.2" height="60.32" fill="#69be67"/>
<rect x="422.83" y="500.37" width="3.2" height="67.63" fill="#69be67"/>
<rect x="426.98" y="493.71" width="3.2" height="74.29" fill="#69be67"/>
<rect x="431.14" y="500.37" width="3.2" height="67.63" fill="#69be67"/>
<rect x="435.30" y="493.71" width="3.2" height="74.29" fill="#69be67"/>
<rect x="439.45" y="486.72" width="3.2" height="81.28" fill="#69be67"/>
<rect x="443.61" y="479.74" width="3.2" height="88.27" fill="#69be67"/>
<rect x="447.76" y="486.72" width="3.2" height="81.28" fill="#69be67"/>
<rect x="451.92" y="479.74" width="3.2" height="88.27" fill="#69be67"/>
<rect x="456.08" y="473.38" width="3.2" height="94.61" fill="#69be67"/>
<rect x="460.23" y="466.40" width="3.2" height="101.60" fill="#69be67"/>
<rect x="464.39" y="473.38" width="3.2" height="94.61" fill="#69be67"/>
<rect x="468.54" y="466.40" width="3.2" height="101.60" fill="#69be67"/>
<rect x="472.70" y="459.41" width="3.2" height="108.59" fill="#69be67"/>
<rect x="476.86" y="452.75" width="3.2" height="115.25" fill="#69be67"/>
<rect x="481.01" y="459.41" width="3.2" height="108.59" fill="#69be67"/>
<rect x="485.17" y="452.75" width="3.2" height="115.25" fill="#69be67"/>
<rect x="489.32" y="445.76" width="3.2" height="122.24" fill="#69be67"/>
<rect x="493.48" y="438.78" width="3.2" height="129.22" fill="#69be67"/>
<rect x="497.64" y="445.76" width="3.2" height="122.24" fill="#69be67"/>
<rect x="501.79" y="439.10" width="3.2" height="128.91" fill="#69be67"/>
<rect x="505.95" y="431.79" width="3.2" height="136.21" fill="#69be67"/>
<rect x="510.10" y="424.81" width="3.2" height="143.19" fill="#69be67"/>
<rect x="514.26" y="431.79" width="3.2" height="136.21" fill="#69be67"/>
<rect x="518.42" y="424.81" width="3.2" height="143.19" fill="#69be67"/>
<rect x="522.57" y="418.14" width="3.2" height="149.86" fill="#69be67"/>
<rect x="526.73" y="411.00" width="3.2" height="157.00" fill="#69be67"/>
<rect x="530.88" y="418.14" width="3.2" height="149.86" fill="#69be67"/>
<rect x="535.04" y="535.93" width="3.2" height="32.07" fill="#69be67"/>
<rect x="539.20" y="529.58" width="3.2" height="38.42" fill="#69be67"/>
<rect x="543.35" y="522.60" width="3.2" height="45.40" fill="#69be67"/>
<rect x="547.51" y="529.58" width="3.2" height="38.42" fill="#69be67"/>
<rect x="551.66" y="522.60" width="3.2" height="45.40" fill="#69be67"/>
<rect x="555.82" y="515.93" width="3.2" height="52.07" fill="#69be67"/>
<rect x="559.98" y="508.63" width="3.2" height="59.37" fill="#69be67"/>
<rect x="564.13" y="515.93" width="3.2" height="52.07" fill="#69be67"/>
<rect x="568.29" y="508.63" width="3.2" height="59.37" fill="#69be67"/>
<rect x="572.44" y="501.80" width="3.2" height="66.20" fill="#69be67"/>
<rect x="576.60" y="495.29" width="3.2" height="72.71" fill="#69be67"/>
<rect x="580.76" y="501.80" width="3.2" height="66.20" fill="#69be67"/>
<rect x="584.91" y="495.29" width="3.2" height="72.71" fill="#69be67"/>
<rect x="589.07" y="487.99" width="3.2" height="80.01" fill="#69be67"/>
<rect x="593.22" y="481.00" width="3.2" height="86.99" fill="#69be67"/>
<rect x="597.38" y="487.99" width="3.2" height="80.01" fill="#69be67"/>
<rect x="601.54" y="481.32" width="3.2" height="86.68" fill="#69be67"/>
<rect x="605.69" y="474.66" width="3.2" height="93.34" fill="#69be67"/>
<rect x="609.85" y="467.99" width="3.2" height="100.01" fill="#69be67"/>
<rect x="614.00" y="474.66" width="3.2" height="93.34" fill="#69be67"/>
<rect x="618.16" y="467.99" width="3.2" height="100.01" fill="#69be67"/>
<rect x="622.32" y="461.00" width="3.2" height="107.00" fill="#69be67"/>
<rect x="626.47" y="454.02" width="3.2" height="113.98" fill="#69be67"/>
<rect x="630.63" y="461.00" width="3.2" height="107.00" fill="#69be67"/>
<rect x="634.78" y="454.02" width="3.2" height="113.98" fill="#69be67"/>
<rect x="638.94" y="447.35" width="3.2" height="120.65" fill="#69be67"/>
<rect x="643.10" y="440.37" width="3.2" height="127.64" fill="#69be67"/>
<rect x="647.25" y="381.31" width="3.2" height="186.69" fill="#69be67"/>
<rect x="651.41" y="374.33" width="3.2" height="193.67" fill="#69be67"/>
<rect x="655.56" y="367.34" width="3.2" height="200.66" fill="#69be67"/>
<rect x="659.72" y="360.67" width="3.2" height="207.33" fill="#69be67"/>
<rect x="663.88" y="461.00" width="3.2" height="107.00" fill="#69be67"/>
<rect x="668.03" y="457.19" width="3.2" height="110.81" fill="#69be67"/>
<rect x="672.19" y="453.54" width="3.2" height="114.46" fill="#69be67"/>
<rect x="676.34" y="450.52" width="3.2" height="117.47" fill="#69be67"/>
<rect x="680.50" y="540.85" width="3.2" height="27.15" fill="#69be67"/>
<rect x="684.66" y="537.20" width="3.2" height="30.80" fill="#69be67"/>
<rect x="688.81" y="533.71" width="3.2" height="34.29" fill="#69be67"/>
<rect x="692.97" y="530.22" width="3.2" height="37.78" fill="#69be67"/>
<rect x="697.12" y="540.85" width="3.2" height="27.15" fill="#69be67"/>
<rect x="701.28" y="540.85" width="3.2" height="27.15" fill="#69be67"/>
<rect x="705.44" y="537.20" width="3.2" height="30.80" fill="#69be67"/>
<rect x="709.59" y="533.71" width="3.2" height="34.29" fill="#69be67"/>
<rect x="713.75" y="540.85" width="3.2" height="27.15" fill="#69be67"/>
<rect x="717.90" y="540.85" width="3.2" height="27.15" fill="#69be67"/>
<rect x="722.06" y="537.20" width="3.2" height="30.80" fill="#69be67"/>
<rect x="726.22" y="533.71" width="3.2" height="34.29" fill="#69be67"/>
<rect x="730.37" y="540.85" width="3.2" height="27.15" fill="#69be67"/>
<rect x="734.53" y="540.85" width="3.2" height="27.15" fill="#69be67"/>
<rect x="738.68" y="537.20" width="3.2" height="30.80" fill="#69be67"/>
<rect x="742.84" y="533.71" width="3.2" height="34.29" fill="#69be67"/>
<rect x="747.00" y="540.85" width="3.2" height="27.15" fill="#69be67"/>
<rect x="751.15" y="537.20" width="3.2" height="30.80" fill="#69be67"/>
<rect x="755.31" y="533.71" width="3.2" height="34.29" fill="#69be67"/>
<rect x="759.46" y="530.22" width="3.2" height="37.78" fill="#69be67"/>
<rect x="763.62" y="540.85" width="3.2" height="27.15" fill="#69be67"/>
<rect x="767.78" y="537.20" width="3.2" height="30.80" fill="#69be67"/>
<rect x="771.93" y="533.71" width="3.2" height="34.29" fill="#69be67"/>
<rect x="776.09" y="530.22" width="3.2" height="37.78" fill="#69be67"/>
<rect x="780.24" y="540.85" width="3.2" height="27.15" fill="#69be67"/>
<rect x="784.40" y="537.20" width="3.2" height="30.80" fill="#69be67"/>
<rect x="788.56" y="533.71" width="3.2" height="34.29" fill="#69be67"/>
<rect x="792.71" y="530.22" width="3.2" height="37.78" fill="#69be67"/>
<rect x="796.87" y="540.85" width="3.2" height="27.15" fill="#69be67"/>
<rect x="801.02" y="537.20" width="3.2" height="30.80" fill="#69be67"/>
<rect x="805.18" y="533.71" width="3.2" height="34.29" fill="#69be67"/>
<rect x="809.34" y="530.22" width="3.2" height="37.78" fill="#69be67"/>
<rect x="813.49" y="540.85" width="3.2" height="27.15" fill="#69be67"/>
<rect x="817.65" y="537.20" width="3.2" height="30.80" fill="#69be67"/>
<rect x="821.80" y="533.71" width="3.2" height="34.29" fill="#69be67"/>
<rect x="825.96" y="530.22" width="3.2" height="37.78" fill="#69be67"/>
<rect x="830.12" y="540.85" width="3.2" height="27.15" fill="#69be67"/>
<rect x="834.27" y="537.20" width="3.2" height="30.80" fill="#69be67"/>
<rect x="838.43" y="533.71" width="3.2" height="34.29" fill="#69be67"/>
<rect x="842.58" y="530.22" width="3.2" height="37.78" fill="#69be67"/>
<rect x="846.74" y="540.85" width="3.2" height="27.15" fill="#69be67"/>
<rect x="850.90" y="537.20" width="3.2" height="30.80" fill="#69be67"/>
<rect x="855.05" y="533.71" width="3.2" height="34.29" fill="#69be67"/>
<rect x="859.21" y="530.22" width="3.2" height="37.78" fill="#69be67"/>
<rect x="863.36" y="540.85" width="3.2" height="27.15" fill="#69be67"/>
<rect x="867.52" y="537.20" width="3.2" height="30.80" fill="#69be67"/>
<rect x="871.68" y="533.71" width="3.2" height="34.29" fill="#69be67"/>
<rect x="875.83" y="530.22" width="3.2" height="37.78" fill="#69be67"/>
<rect x="879.99" y="540.85" width="3.2" height="27.15" fill="#69be67"/>
<rect x="884.14" y="537.20" width="3.2" height="30.80" fill="#69be67"/>
<rect x="888.30" y="533.71" width="3.2" height="34.29" fill="#69be67"/>
<rect x="892.46" y="530.22" width="3.2" height="37.78" fill="#69be67"/>
<rect x="896.61" y="540.85" width="3.2" height="27.15" fill="#69be67"/>
<rect x="900.77" y="537.20" width="3.2" height="30.80" fill="#69be67"/>
<rect x="904.92" y="533.71" width="3.2" height="34.29" fill="#69be67"/>
<rect x="909.08" y="530.22" width="3.2" height="37.78" fill="#69be67"/>
<text transform="translate(90.5,338.8) rotate(90)" class="axt">Channel 1 - kWh (sum)</text>
<path d="M995.5 249 q0-3 3-3 h1.5 v19.75 h-1.5 q-3 0 -3-3z" fill="#69be67"/></svg>
<div class="t " style="left:86.50px;top:595.82px;font-size:12.5px;color:#4a5753;letter-spacing:0.7px">Mar 12, 2020 - 12:00 am</div>
<div class="t " style="left:834.40px;top:595.82px;font-size:12.5px;color:#4a5753;letter-spacing:0.7px">Mar 19, 2020 - 12:00 pm</div>
<div class="t " style="left:530.40px;top:650.40px;font-size:13px;color:#1e1e2a;letter-spacing:0.75px">Highlight a status flag:</div>
<div class="a" style="left:690.5px;top:641.5px;width:240.5px;height:29px;background:#fff;border:1px solid #cbcbcb;border-radius:3px"></div>
<div class="t " style="left:700.80px;top:648.35px;font-size:14px;color:#1a1a1a">select one</div>
<svg class="a" style="left:914px;top:652px" width="9" height="9"><polygon points="1,1 8,1 4.5,8" fill="#111"/></svg>
<svg class="a" style="left:794px;top:680px" width="28" height="10"><defs><linearGradient id="cg" x1="0" y1="0" x2="0" y2="1"><stop offset="0" stop-color="#8c8c8c"/><stop offset="1" stop-color="#b5b5b5"/></linearGradient></defs><polygon points="1,1 27,1 24,4 15,8.5 13,8.5 4,4" fill="url(#cg)"/></svg>
<div class="t " style="left:32.80px;top:714.20px;font-size:13px;color:#575757;letter-spacing:0.55px">327 Results</div>
<svg class="a" style="left:120px;top:715px" width="8" height="12"><polygon points="2,2 6,5.9 2,9.8" fill="#777"/></svg>
<div class="t " style="left:141.20px;top:714.20px;font-size:13px;color:#575757;letter-spacing:0.76px">Displaying 1 &ndash; 100</div>
<svg class="a" style="left:276px;top:710px" width="15" height="16"><rect x="1.6" y="1.5" width="12" height="13" rx="2" fill="#ececec" stroke="#5a5a5a" stroke-width="1.1"/><path d="M7.3 3.7 v8.6" stroke="#444" stroke-width="1.1"/><path d="M3.8 8 h7.9" stroke="#777" stroke-width="1.1"/></svg>
<div class="a" style="left:828px;top:707px;width:24px;height:25.5px;background:#dcf0d2;border:1px solid #acd69c;border-radius:4px"></div>
<div class="t " style="left:837.00px;top:713.70px;font-size:13px;color:#3d6b2a;font-weight:700">1</div>
<div class="t " style="left:865.00px;top:713.70px;font-size:13px;color:#3574ad">2</div>
<div class="t " style="left:890.50px;top:713.70px;font-size:13px;color:#3574ad">3</div>
<div class="t " style="left:915.00px;top:713.70px;font-size:13px;color:#3574ad">4</div>
<div class="a" style="left:31px;top:736px;width:900px;height:1px;background:#cfcfcf"></div>
<div class="a" style="left:32px;top:737px;width:242.5px;height:69px;background:linear-gradient(#edf5fb 0%,#e3eef8 40%,#d2e5f4 50%,#c7ddf0 57%,#d6e7f5 66%,#e4eff8 80%,#e8f1f9 100%)"></div>
<div class="a" style="left:274.5px;top:737px;width:656px;height:69px;background:linear-gradient(#f8f8f8 0%,#f3f3f3 50%,#e6e6e6 100%)"></div>
<div class="a" style="left:696.5px;top:737px;width:234px;height:34px;background:linear-gradient(#f3f3f3 0%,#eeeeee 55%,#e2e2e2 100%)"></div>
<div class="a" style="left:696.5px;top:772px;width:234px;height:34px;background:linear-gradient(#f3f3f3 0%,#eeeeee 55%,#e2e2e2 100%)"></div>
<div class="a" style="left:274px;top:737px;width:1px;height:69px;background:#d3d3d3"></div>
<div class="a" style="left:378px;top:737px;width:1px;height:69px;background:#d3d3d3"></div>
<div class="a" style="left:504px;top:737px;width:1px;height:69px;background:#d3d3d3"></div>
<div class="a" style="left:696px;top:737px;width:1px;height:69px;background:#d3d3d3"></div>
<div class="a" style="left:811.5px;top:772px;width:1px;height:34px;background:#d3d3d3"></div>
<div class="a" style="left:697px;top:771px;width:234px;height:1px;background:#d3d3d3"></div>
<div class="a" style="left:31px;top:737px;width:1px;height:263px;background:#cfcfcf"></div>
<div class="a" style="left:930px;top:737px;width:1px;height:263px;background:#cfcfcf"></div>
<div class="a" style="left:31px;top:805.5px;width:900px;height:1px;background:#cdcdcd"></div>
<div class="t " style="left:105.60px;top:764.50px;font-size:13px;color:#3a76a8;font-weight:700;letter-spacing:0.59px"><u style="text-underline-offset:1px">Interval Time</u></div>
<svg class="a" style="left:259px;top:766px" width="12" height="8"><polygon points="1,1.5 11,1.5 6,7" fill="#2f6fae"/></svg>
<div class="t " style="left:293.00px;top:764.50px;font-size:13px;color:#666;font-weight:700;letter-spacing:0.43px">Channel 1</div>
<div class="t " style="left:408.00px;top:764.50px;font-size:13px;color:#666;font-weight:700;letter-spacing:0.43px">Channel 2</div>
<div class="t " style="left:550.40px;top:764.50px;font-size:13px;color:#3a76a8;font-weight:700;letter-spacing:0.58px"><u style="text-underline-offset:1px">Collected Time</u></div>
<div class="t " style="left:773.75px;top:747.00px;font-size:13px;color:#5b6168;font-weight:700;letter-spacing:0.18px">Status Flags</div>
<div class="t " style="left:707.00px;top:782.00px;font-size:13px;color:#5b6168;font-weight:700;letter-spacing:0.3px">Interval Status</div>
<div class="t " style="left:821.75px;top:782.00px;font-size:13px;color:#5b6168;font-weight:700;letter-spacing:0.28px">Channel Status</div>
<div class="a" style="left:32px;top:806.5px;width:898px;height:37.08px;background:#ffffff"></div>
<div class="a" style="left:504px;top:806.5px;width:192px;height:37.08px;background:#ccf5c8"></div>
<svg class="a" style="left:714px;top:814.0px" width="18" height="23" viewBox="0 0 18 23"><defs><linearGradient id="fg" x1="0" y1="0" x2="1" y2="1"><stop offset="0" stop-color="#f07a80"/><stop offset="0.45" stop-color="#d60c0c"/><stop offset="1" stop-color="#b00000"/></linearGradient></defs><path d="M1.2 3.2 q0-0.6 0.6-0.6 h7.7 v-1.4 h6.5 v11.9 h-6.5 v1.4 h-7.7 q-0.6 0 -0.6-0.6z" fill="url(#fg)" stroke="#6e1e1e" stroke-width="0.6"/><rect x="15.9" y="0.3" width="1.1" height="21.4" fill="#111"/></svg>
<div class="t " style="left:45.30px;top:819.00px;font-size:13px;letter-spacing:0.94px">Mar 19, 2020 &ndash; 12:00 pm GMT-8</div>
<div class="t " style="left:287.30px;top:819.00px;font-size:13px;letter-spacing:0.9px">11.880 kWh</div>
<div class="t " style="left:391.20px;top:819.00px;font-size:13px;letter-spacing:0.95px">183.691 Vrmsh</div>
<div class="t " style="left:516.80px;top:819.00px;font-size:13px;letter-spacing:0.93px">Mar 19, 2020 &ndash; 12:06 pm</div>
<div class="t " style="left:738.40px;top:819.00px;font-size:13px;letter-spacing:0.68px">1 flag</div>
<div class="a" style="left:824.5px;top:826px;width:5.5px;height:1.2px;background:#222"></div>
<div class="a" style="left:32px;top:843.58px;width:898px;height:37.08px;background:#efefef"></div>
<div class="a" style="left:504px;top:843.58px;width:192px;height:37.08px;background:#c3e9c0"></div>
<svg class="a" style="left:714px;top:851.08px" width="18" height="23" viewBox="0 0 18 23"><defs><linearGradient id="fg" x1="0" y1="0" x2="1" y2="1"><stop offset="0" stop-color="#f07a80"/><stop offset="0.45" stop-color="#d60c0c"/><stop offset="1" stop-color="#b00000"/></linearGradient></defs><path d="M1.2 3.2 q0-0.6 0.6-0.6 h7.7 v-1.4 h6.5 v11.9 h-6.5 v1.4 h-7.7 q-0.6 0 -0.6-0.6z" fill="url(#fg)" stroke="#6e1e1e" stroke-width="0.6"/><rect x="15.9" y="0.3" width="1.1" height="21.4" fill="#111"/></svg>
<div class="t " style="left:45.30px;top:856.08px;font-size:13px;letter-spacing:0.94px">Mar 19, 2020 &ndash; 11:00 am GMT-8</div>
<div class="t " style="left:287.30px;top:856.08px;font-size:13px;letter-spacing:0.9px">10.800 kWh</div>
<div class="t " style="left:391.20px;top:856.08px;font-size:13px;letter-spacing:0.95px">166.992 Vrmsh</div>
<div class="t " style="left:516.80px;top:856.08px;font-size:13px;letter-spacing:0.93px">Mar 19, 2020 &ndash; 12:06 pm</div>
<div class="t " style="left:738.40px;top:856.08px;font-size:13px;letter-spacing:0.68px">1 flag</div>
<div class="a" style="left:824.5px;top:864px;width:5.5px;height:1.2px;background:#222"></div>
<div class="a" style="left:32px;top:880.66px;width:898px;height:37.08px;background:#ffffff"></div>
<div class="a" style="left:504px;top:880.66px;width:192px;height:37.08px;background:#ccf5c8"></div>
<svg class="a" style="left:714px;top:888.16px" width="18" height="23" viewBox="0 0 18 23"><defs><linearGradient id="fg" x1="0" y1="0" x2="1" y2="1"><stop offset="0" stop-color="#f07a80"/><stop offset="0.45" stop-color="#d60c0c"/><stop offset="1" stop-color="#b00000"/></linearGradient></defs><path d="M1.2 3.2 q0-0.6 0.6-0.6 h7.7 v-1.4 h6.5 v11.9 h-6.5 v1.4 h-7.7 q-0.6 0 -0.6-0.6z" fill="url(#fg)" stroke="#6e1e1e" stroke-width="0.6"/><rect x="15.9" y="0.3" width="1.1" height="21.4" fill="#111"/></svg>
<div class="t " style="left:45.30px;top:893.16px;font-size:13px;letter-spacing:0.94px">Mar 19, 2020 &ndash; 10:00 am GMT-8</div>
<div class="t " style="left:287.30px;top:893.16px;font-size:13px;letter-spacing:0.9px">9.720 kWh</div>
<div class="t " style="left:391.20px;top:893.16px;font-size:13px;letter-spacing:0.95px">150.293 Vrmsh</div>
<div class="t " style="left:516.80px;top:893.16px;font-size:13px;letter-spacing:0.93px">Mar 19, 2020 &ndash; 12:06 pm</div>
<div class="t " style="left:738.40px;top:893.16px;font-size:13px;letter-spacing:0.68px">1 flag</div>
<div class="a" style="left:824.5px;top:901px;width:5.5px;height:1.2px;background:#222"></div>
<div class="a" style="left:32px;top:917.74px;width:898px;height:37.08px;background:#efefef"></div>
<div class="a" style="left:504px;top:917.74px;width:192px;height:37.08px;background:#c3e9c0"></div>
<svg class="a" style="left:714px;top:925.24px" width="18" height="23" viewBox="0 0 18 23"><defs><linearGradient id="fg" x1="0" y1="0" x2="1" y2="1"><stop offset="0" stop-color="#f07a80"/><stop offset="0.45" stop-color="#d60c0c"/><stop offset="1" stop-color="#b00000"/></linearGradient></defs><path d="M1.2 3.2 q0-0.6 0.6-0.6 h7.7 v-1.4 h6.5 v11.9 h-6.5 v1.4 h-7.7 q-0.6 0 -0.6-0.6z" fill="url(#fg)" stroke="#6e1e1e" stroke-width="0.6"/><rect x="15.9" y="0.3" width="1.1" height="21.4" fill="#111"/></svg>
<div class="t " style="left:45.30px;top:930.24px;font-size:13px;letter-spacing:0.94px">Mar 19, 2020 &ndash; 9:00 am GMT-8</div>
<div class="t " style="left:287.30px;top:930.24px;font-size:13px;letter-spacing:0.9px">8.640 kWh</div>
<div class="t " style="left:391.20px;top:930.24px;font-size:13px;letter-spacing:0.95px">133.593 Vrmsh</div>
<div class="t " style="left:516.80px;top:930.24px;font-size:13px;letter-spacing:0.93px">Mar 19, 2020 &ndash; 12:06 pm</div>
<div class="t " style="left:738.40px;top:930.24px;font-size:13px;letter-spacing:0.68px">1 flag</div>
<div class="a" style="left:824.5px;top:938px;width:5.5px;height:1.2px;background:#222"></div>
<div class="a" style="left:32px;top:954.82px;width:898px;height:37.08px;background:#ffffff"></div>
<div class="a" style="left:504px;top:954.82px;width:192px;height:37.08px;background:#ccf5c8"></div>
<svg class="a" style="left:714px;top:962.32px" width="18" height="23" viewBox="0 0 18 23"><defs><linearGradient id="fg" x1="0" y1="0" x2="1" y2="1"><stop offset="0" stop-color="#f07a80"/><stop offset="0.45" stop-color="#d60c0c"/><stop offset="1" stop-color="#b00000"/></linearGradient></defs><path d="M1.2 3.2 q0-0.6 0.6-0.6 h7.7 v-1.4 h6.5 v11.9 h-6.5 v1.4 h-7.7 q-0.6 0 -0.6-0.6z" fill="url(#fg)" stroke="#6e1e1e" stroke-width="0.6"/><rect x="15.9" y="0.3" width="1.1" height="21.4" fill="#111"/></svg>
<div class="t " style="left:45.30px;top:967.32px;font-size:13px;letter-spacing:0.94px">Mar 19, 2020 &ndash; 8:00 am GMT-8</div>
<div class="t " style="left:287.30px;top:967.32px;font-size:13px;letter-spacing:0.9px">11.880 kWh</div>
<div class="t " style="left:391.20px;top:967.32px;font-size:13px;letter-spacing:0.95px">183.691 Vrmsh</div>
<div class="t " style="left:516.80px;top:967.32px;font-size:13px;letter-spacing:0.93px">Mar 19, 2020 &ndash; 8:10 am</div>
<div class="t " style="left:738.40px;top:967.32px;font-size:13px;letter-spacing:0.68px">1 flag</div>
<div class="a" style="left:824.5px;top:975px;width:5.5px;height:1.2px;background:#222"></div>
<div class="a" style="left:32px;top:991.9px;width:898px;height:37.08px;background:#efefef"></div>
<div class="a" style="left:504px;top:991.9px;width:192px;height:37.08px;background:#c3e9c0"></div>
<svg class="a" style="left:714px;top:999.4px" width="18" height="23" viewBox="0 0 18 23"><defs><linearGradient id="fg" x1="0" y1="0" x2="1" y2="1"><stop offset="0" stop-color="#f07a80"/><stop offset="0.45" stop-color="#d60c0c"/><stop offset="1" stop-color="#b00000"/></linearGradient></defs><path d="M1.2 3.2 q0-0.6 0.6-0.6 h7.7 v-1.4 h6.5 v11.9 h-6.5 v1.4 h-7.7 q-0.6 0 -0.6-0.6z" fill="url(#fg)" stroke="#6e1e1e" stroke-width="0.6"/><rect x="15.9" y="0.3" width="1.1" height="21.4" fill="#111"/></svg>
</body></html>
